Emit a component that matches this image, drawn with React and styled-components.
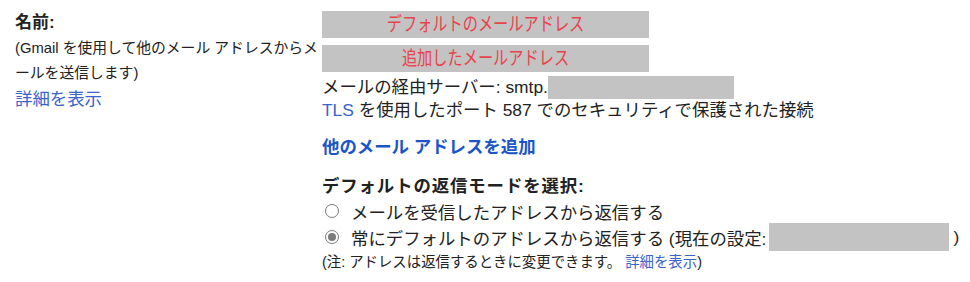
import React from "react";
import styled, { createGlobalStyle } from "styled-components";

const GlobalStyle = createGlobalStyle`
  body {
    margin: 0;
    background: #ffffff;
    font-family: "Liberation Sans", Arial, "Noto Sans CJK JP", sans-serif;
    color: #222222;
  }
`;

const Page = styled.div`
  display: flex;
  padding-left: 15px;
  width: 970px;
  height: 282px;
  box-sizing: border-box;
  overflow: hidden;
`;

const LeftCol = styled.div`
  width: 307px;
  flex-shrink: 0;
  padding-top: 11px;
`;

const Label = styled.div`
  font-size: 17px;
  font-weight: bold;
  line-height: 24px;
`;

const Desc = styled.div`
  font-size: 14.8px;
  line-height: 25px;
  margin-top: 1px;
  line-break: anywhere;
  word-break: break-all;
`;

const Link = styled.span`
  color: ${(p) => (p.$bold ? "#1a55c9" : "#3b63cc")};
  font-weight: ${(p) => (p.$bold ? "bold" : "normal")};
  cursor: pointer;
`;

const DetailLink = styled.div`
  font-size: 17.4px;
  line-height: 26px;
  color: #3b63cc;
`;

const RightCol = styled.div`
  padding-top: 11px;
  font-size: 17.4px;
`;

const Redacted = styled.div`
  width: 327px;
  height: 27px;
  background: #c3c3c3;
  margin-bottom: ${(p) => p.$gap || 0}px;
  display: flex;
  align-items: center;
  justify-content: center;
  overflow: hidden;
`;

const RedText = styled.span`
  display: inline-block;
  color: #e8424c;
  font-size: 19px;
  line-height: 27px;
  white-space: nowrap;
  transform: scaleX(0.8);
`;

const Line = styled.div`
  display: flex;
  align-items: center;
  height: ${(p) => p.$h || 23}px;
  line-height: 23px;
  white-space: nowrap;
`;

const Blank = styled.span`
  display: inline-block;
  width: ${(p) => p.$w}px;
  height: ${(p) => p.$h || 23}px;
  margin-left: ${(p) => p.$ml || 0}px;
  margin-right: ${(p) => p.$mr || 0}px;
  background: #c3c3c3;
`;

const AddLine = styled.div`
  margin-top: 13px;
  line-height: 24px;
  height: 24px;
`;

const Heading = styled.div`
  margin-top: 15px;
  font-weight: bold;
  letter-spacing: 0.9px;
  line-height: 24px;
`;

const RadioRow = styled.label`
  display: flex;
  align-items: center;
  height: 26px;
  white-space: nowrap;
`;

const Radio = styled.span`
  width: 14px;
  height: 14px;
  border-radius: 50%;
  border: 1.4px solid #7a7a7a;
  box-sizing: border-box;
  margin: 0 12px 0 3px;
  display: flex;
  align-items: center;
  justify-content: center;
  flex-shrink: 0;
  &::after {
    content: "";
    width: 8px;
    height: 8px;
    border-radius: 50%;
    background: ${(p) => (p.$checked ? "#7a7a7a" : "transparent")};
  }
`;

const Note = styled.div`
  font-size: 14.4px;
  line-height: 24px;
`;

export default function App() {
  return (
    <>
      <GlobalStyle />
      <Page>
        <LeftCol>
          <Label>名前:</Label>
          <Desc>(Gmail を使用して他のメール アドレスからメールを送信します)</Desc>
          <DetailLink>詳細を表示</DetailLink>
        </LeftCol>
        <RightCol>
          <Redacted $gap={7}>
            <RedText>デフォルトのメールアドレス</RedText>
          </Redacted>
          <Redacted $gap={3}>
            <RedText>追加したメールアドレス</RedText>
          </Redacted>
          <Line $h={24}>
            メールの経由サーバー: smtp.
            <Blank $w={186} />
          </Line>
          <Line $h={23}>
            <Link>TLS</Link>&nbsp;を使用したポート 587 でのセキュリティで保護された接続
          </Line>
          <AddLine>
            <Link $bold>他のメール アドレスを追加</Link>
          </AddLine>
          <Heading>デフォルトの返信モードを選択:</Heading>
          <RadioRow>
            <Radio />
            メールを受信したアドレスから返信する
          </RadioRow>
          <RadioRow>
            <Radio $checked />
            常にデフォルトのアドレスから返信する (現在の設定:
            <Blank $w={180} $h={28} $ml={3} $mr={4} />)
          </RadioRow>
          <Note>
            (注: アドレスは返信するときに変更できます。 <Link>詳細を表示</Link>)
          </Note>
        </RightCol>
      </Page>
    </>
  );
}
